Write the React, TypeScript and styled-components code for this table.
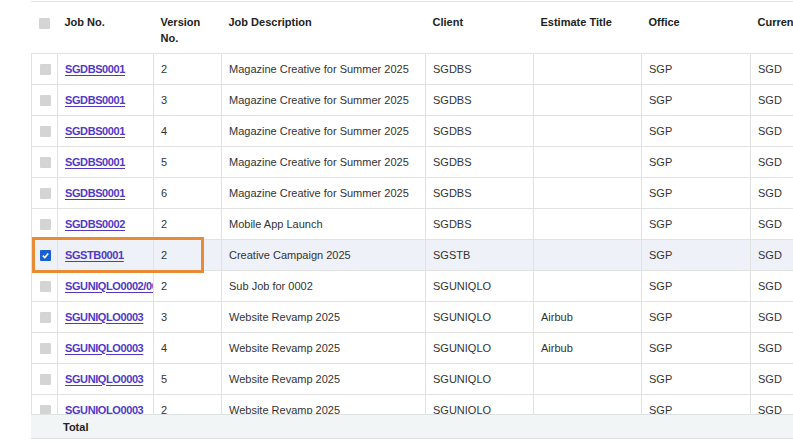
import React from "react";
import styled, { createGlobalStyle } from "styled-components";

const Global = createGlobalStyle`
  html, body { margin: 0; padding: 0; background: #fff; overflow: hidden; }
  body { font-family: "Liberation Sans", Arial, sans-serif; color: #333; }
`;

const Page = styled.div`
  width: 793px;
  height: 444px;
  overflow: hidden;
  position: relative;
  padding-left: 31px;
  box-sizing: border-box;
`;

const Frame = styled.div`
  width: 800px;
  border-top: 1px solid #e4e4e4;
  margin-top: 1px;
  position: relative;
`;

const Scroll = styled.div`
  height: 412px;
  overflow: hidden;
`;

const Table = styled.table`
  border-collapse: collapse;
  table-layout: fixed;
  width: 800px;
  font-size: 11px;
`;

const HeadCell = styled.th<{ $w: number }>`
  width: ${(p) => p.$w}px;
  box-sizing: border-box;
  text-align: left;
  vertical-align: top;
  font-weight: 700;
  color: #222;
  padding: 12px 7px 0 7px;
  height: 51px;
  line-height: 16px;
  border-bottom: 1px solid #e2e2e2;
`;

const Row = styled.tr<{ $selected?: boolean }>`
  background: ${(p) => (p.$selected ? "#eef1f8" : "#fff")};
`;

const Cell = styled.td`
  height: 30px;
  padding: 0 7px;
  border: 1px solid #e2e2e2;
  white-space: nowrap;
  overflow: hidden;
  text-overflow: clip;
  color: #333;
  vertical-align: middle;
`;

const CheckCell = styled(Cell)`
  padding: 0 0 0 8px;
`;

const Box = styled.span<{ $checked?: boolean }>`
  display: inline-flex;
  align-items: center;
  justify-content: center;
  width: 11px;
  height: 11px;
  background: ${(p) => (p.$checked ? "#1660d3" : "#d4d4d4")};
  border-radius: 1px;
  vertical-align: middle;
`;

const JobLink = styled.a`
  color: #5039c6;
  font-weight: 700;
  letter-spacing: -0.4px;
  text-decoration: underline;
  text-underline-offset: 2px;
`;

const Footer = styled.div`
  height: 23px;
  background: #f1f5f5;
  border-top: 1px solid #dde3e3;
  border-bottom: 1px solid #dde3e3;
  display: flex;
  align-items: center;
  padding-left: 32px;
  font-size: 11px;
  font-weight: 700;
  color: #222;
`;

const Highlight = styled.div`
  position: absolute;
  left: 1px;
  top: 235px;
  width: 166px;
  height: 30px;
  border: 3px solid #e98a35;
  pointer-events: none;
`;

const cols = [26, 96, 68, 204, 108, 108, 109, 81];

type R = { job: string; v: string; desc: string; client: string; est?: string; sel?: boolean };
const rows: R[] = [
  { job: "SGDBS0001", v: "2", desc: "Magazine Creative for Summer 2025", client: "SGDBS" },
  { job: "SGDBS0001", v: "3", desc: "Magazine Creative for Summer 2025", client: "SGDBS" },
  { job: "SGDBS0001", v: "4", desc: "Magazine Creative for Summer 2025", client: "SGDBS" },
  { job: "SGDBS0001", v: "5", desc: "Magazine Creative for Summer 2025", client: "SGDBS" },
  { job: "SGDBS0001", v: "6", desc: "Magazine Creative for Summer 2025", client: "SGDBS" },
  { job: "SGDBS0002", v: "2", desc: "Mobile App Launch", client: "SGDBS" },
  { job: "SGSTB0001", v: "2", desc: "Creative Campaign 2025", client: "SGSTB", sel: true },
  { job: "SGUNIQLO0002/0001", v: "2", desc: "Sub Job for 0002", client: "SGUNIQLO" },
  { job: "SGUNIQLO0003", v: "3", desc: "Website Revamp 2025", client: "SGUNIQLO", est: "Airbub" },
  { job: "SGUNIQLO0003", v: "4", desc: "Website Revamp 2025", client: "SGUNIQLO", est: "Airbub" },
  { job: "SGUNIQLO0003", v: "5", desc: "Website Revamp 2025", client: "SGUNIQLO" },
  { job: "SGUNIQLO0003", v: "2", desc: "Website Revamp 2025", client: "SGUNIQLO" },
];

const Check = () => (
  <svg width="9" height="9" viewBox="0 0 10 10">
    <path d="M2 5.2 L4.2 7.3 L8 2.8" fill="none" stroke="#fff" strokeWidth="1.8" />
  </svg>
);

export default function App() {
  const heads = ["", "Job No.", "Version No.", "Job Description", "Client", "Estimate Title", "Office", "Currency"];
  return (
    <Page>
      <Global />
      <Frame>
        <Scroll>
          <Table>
            <thead>
              <tr>
                {heads.map((h, i) => (
                  <HeadCell key={i} $w={cols[i]}>
                    {i === 0 ? <Box /> : i === 2 ? <>Version<br />No.</> : h}
                  </HeadCell>
                ))}
              </tr>
            </thead>
            <tbody>
              {rows.map((r, i) => (
                <Row key={i} $selected={r.sel}>
                  <CheckCell>
                    <Box $checked={r.sel}>{r.sel && <Check />}</Box>
                  </CheckCell>
                  <Cell>
                    <JobLink href="#">{r.job}</JobLink>
                  </Cell>
                  <Cell>{r.v}</Cell>
                  <Cell>{r.desc}</Cell>
                  <Cell>{r.client}</Cell>
                  <Cell>{r.est ?? ""}</Cell>
                  <Cell>SGP</Cell>
                  <Cell>SGD</Cell>
                </Row>
              ))}
            </tbody>
          </Table>
        </Scroll>
        <Footer>Total</Footer>
        <Highlight />
      </Frame>
    </Page>
  );
}
